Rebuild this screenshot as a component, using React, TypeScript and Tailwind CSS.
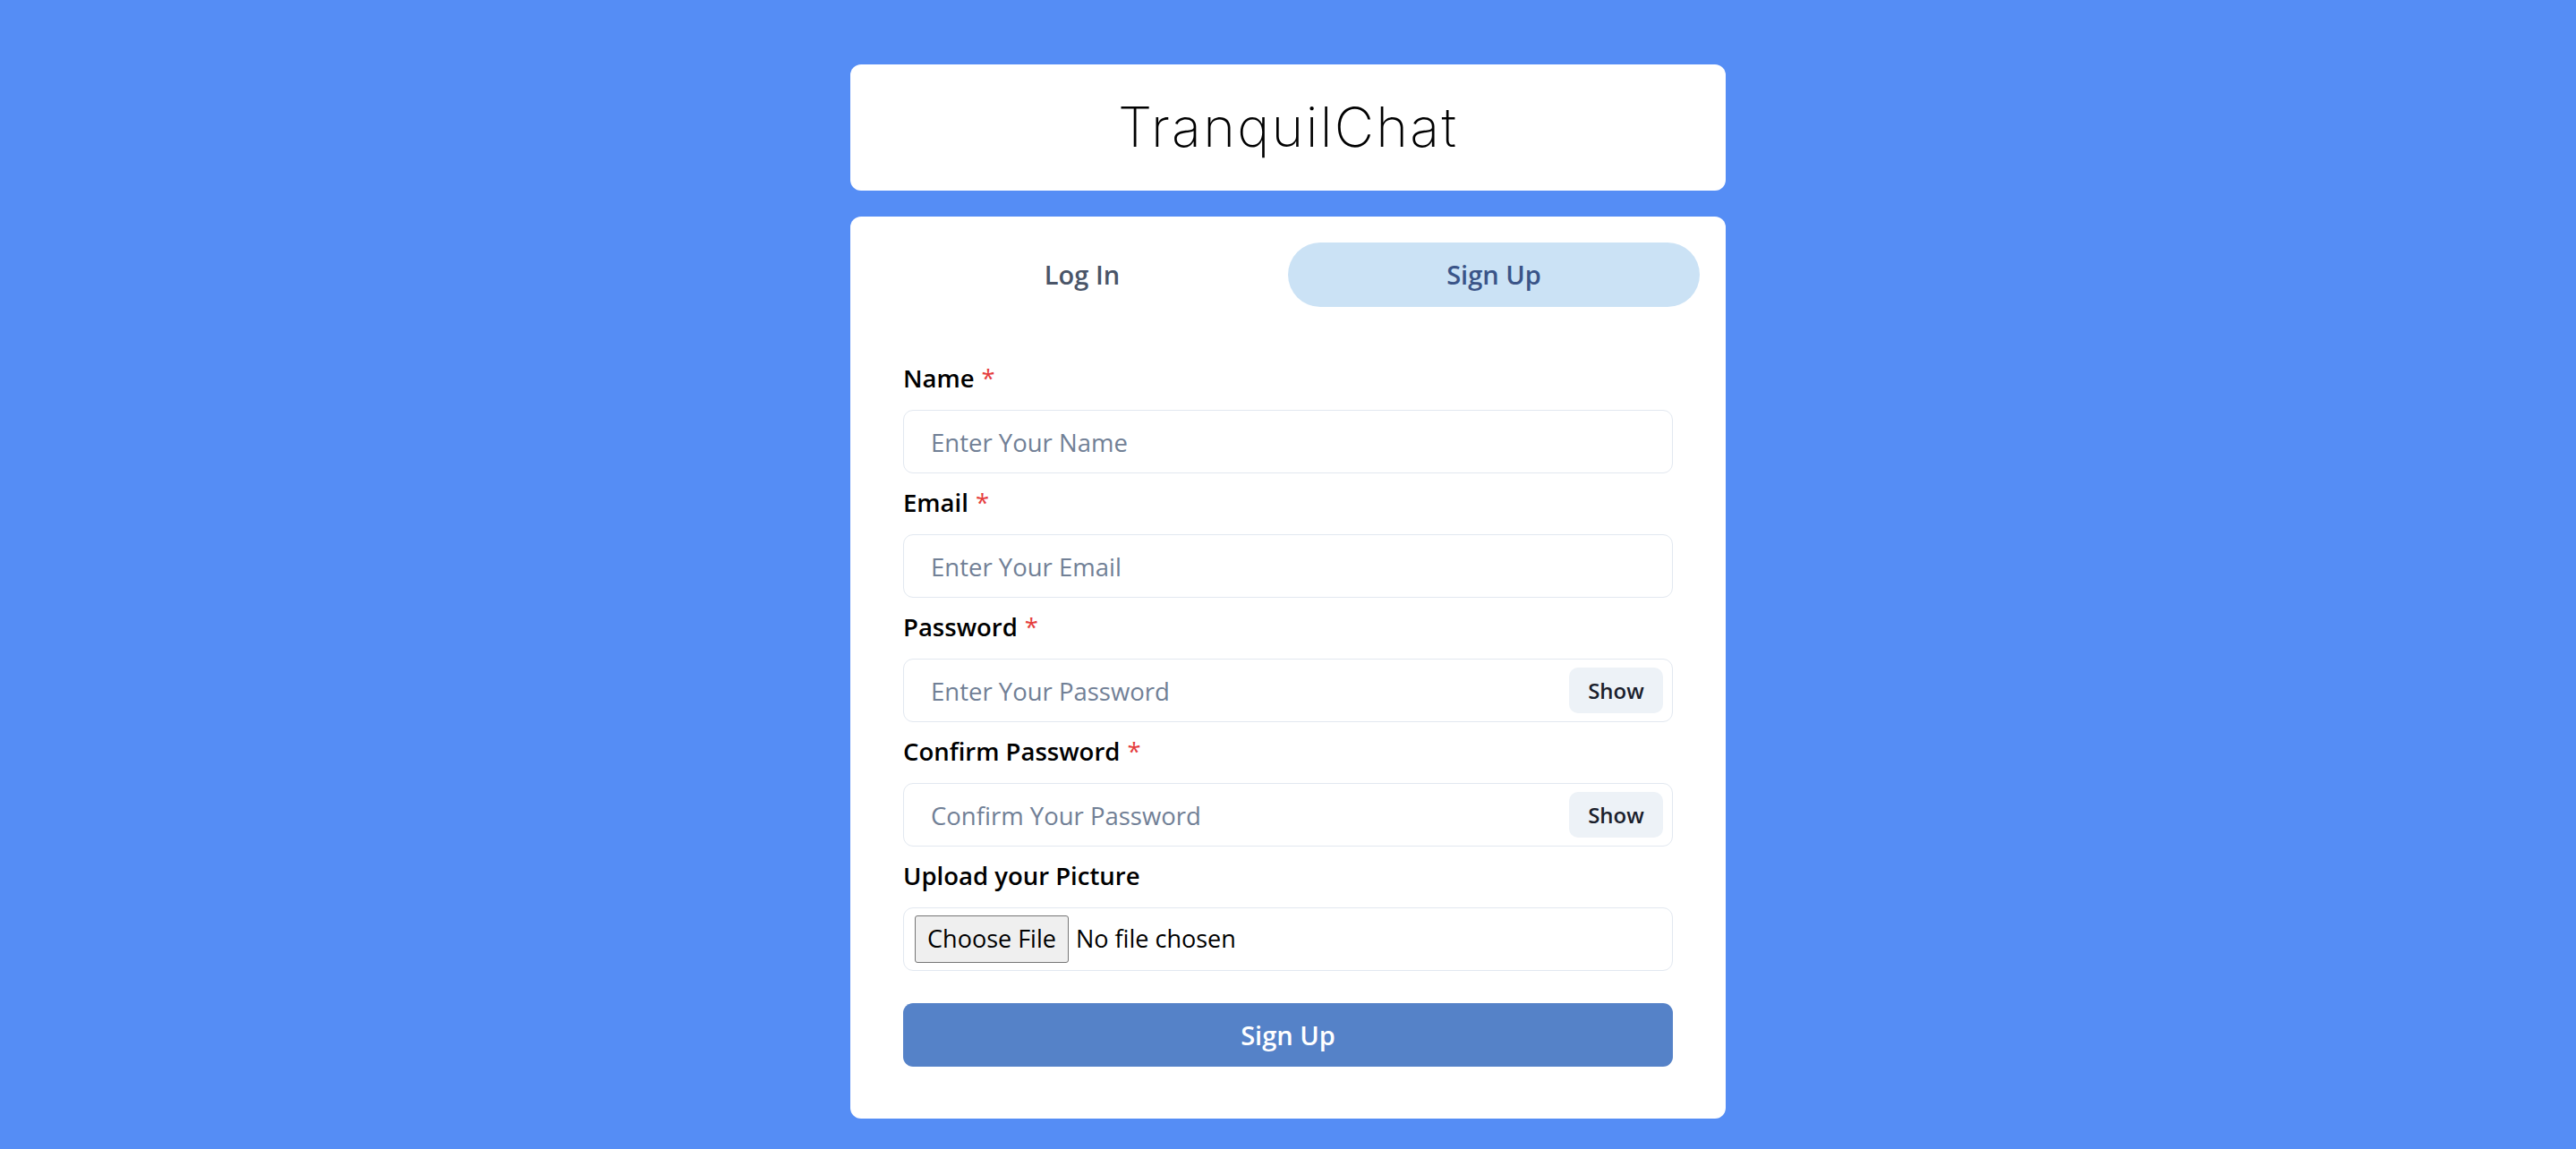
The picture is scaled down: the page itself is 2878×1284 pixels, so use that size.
import React from "react";

const bodyFont = { fontFamily: '"Open Sans", "Noto Sans", "Liberation Sans", sans-serif' };

function Label({ text, required }: { text: string; required?: boolean }) {
  return (
    <div className="h-[42px] leading-[42px] mb-[15px] text-[27.5px] font-semibold text-black flex items-center pt-[2px]">
      <span>{text}</span>
      {required && <span className="ml-[8px] text-[#e53e3e] font-normal">*</span>}
    </div>
  );
}

function TextField({ label, placeholder, password }: { label: string; placeholder: string; password?: boolean }) {
  return (
    <div className="mb-[11px]">
      <Label text={label} required />
      <div className="h-[71px] border border-[#e2e8f0] rounded-[11px] flex items-center">
        <input
          type={password ? "password" : "text"}
          placeholder={placeholder}
          className="flex-1 h-full bg-transparent pl-[30px] pt-[2px] text-[27.5px] outline-none placeholder:text-[#718096] text-black"
          style={bodyFont}
        />
        {password && (
          <button className="mr-[10px] w-[105px] h-[51px] rounded-[10px] bg-[#edf2f7] text-[24px] font-semibold text-[#1a202c]">
            Show
          </button>
        )}
      </div>
    </div>
  );
}

export default function App() {
  return (
    <div className="min-h-screen w-full bg-[#558df5] flex flex-col items-center" style={bodyFont}>
      <div className="mt-[72px] w-[978px] h-[141px] bg-white rounded-[12px] flex items-center justify-center">
        <h1
          className="text-[61px] font-extralight text-black tracking-[2.3px] leading-none"
          style={{ fontFamily: 'Inter, "Noto Sans", sans-serif' }}
        >
          TranquilChat
        </h1>
      </div>
      <div className="mt-[29px] w-[978px] bg-white rounded-[12px] px-[29px] pt-[29px] pb-[29px]">
        <div className="flex">
          <button className="flex-1 h-[72px] rounded-full text-[29px] font-semibold text-[#4a5568]">Log In</button>
          <button className="flex-1 h-[72px] rounded-full bg-[#cbe2f5] text-[29px] font-semibold text-[#3a5488]">
            Sign Up
          </button>
        </div>
        <div className="px-[30px] pt-[58px] pb-[29px] flex flex-col">
          <TextField label="Name" placeholder="Enter Your Name" />
          <TextField label="Email" placeholder="Enter Your Email" />
          <TextField label="Password" placeholder="Enter Your Password" password />
          <TextField label="Confirm Password" placeholder="Confirm Your Password" password />
          <div>
            <Label text="Upload your Picture" />
            <div className="h-[71px] border border-[#e2e8f0] rounded-[11px] flex items-center pl-[12px]">
              <span className="h-[53px] w-[172px] flex items-center justify-center bg-[#efefef] border border-[#767676] rounded-[3px] text-[27px] text-black">
                Choose File
              </span>
              <span className="ml-[8px] text-[27px] text-black">No file chosen</span>
            </div>
          </div>
          <button className="mt-[36px] h-[71px] w-full rounded-[11px] bg-[#5582c8] text-white text-[29px] font-semibold">
            Sign Up
          </button>
        </div>
      </div>
    </div>
  );
}
